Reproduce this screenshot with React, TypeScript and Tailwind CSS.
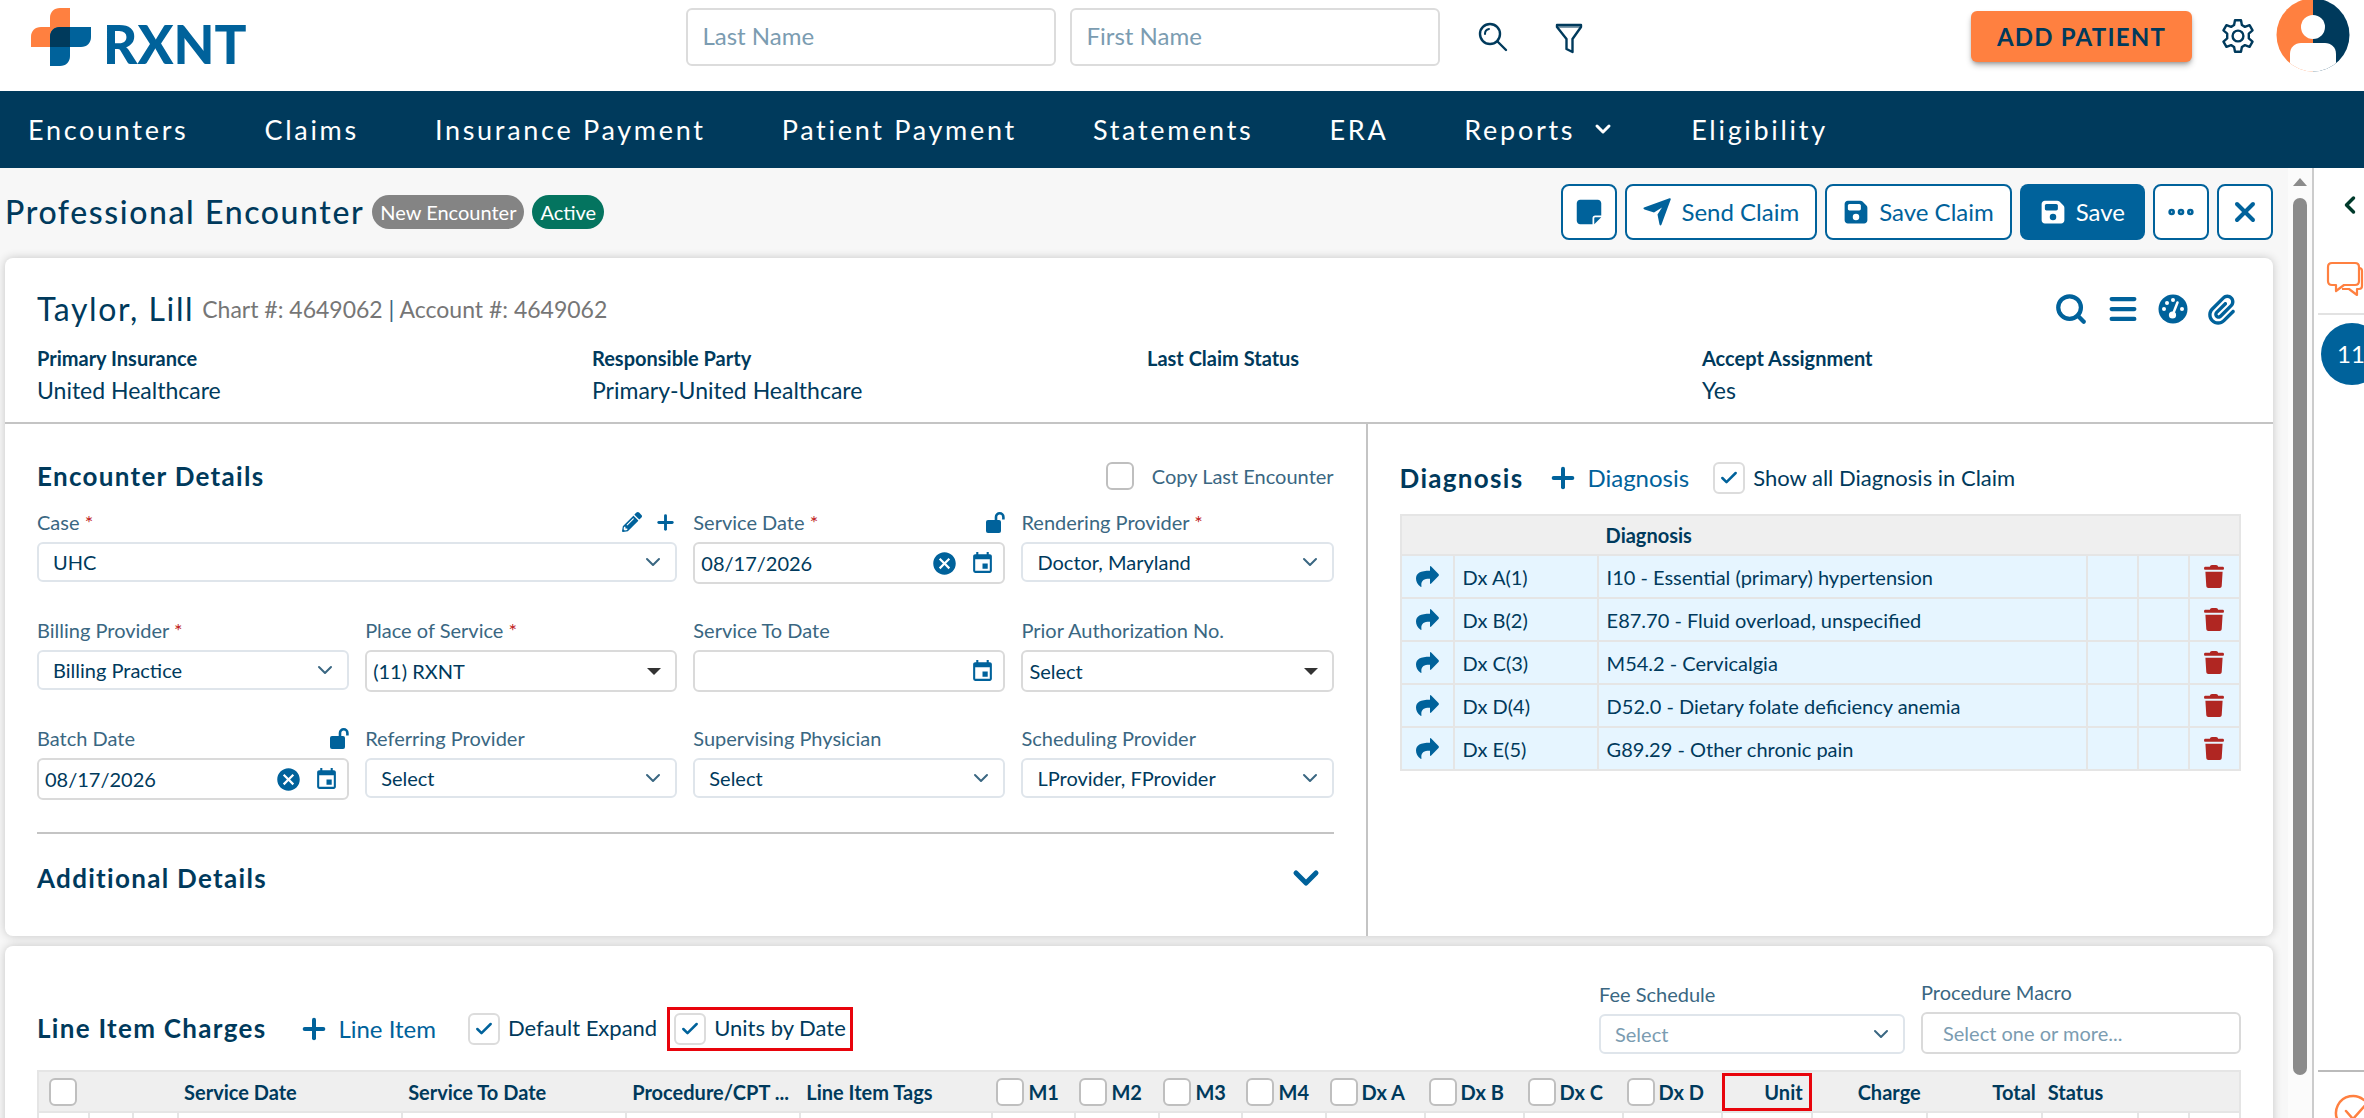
import { useId, type ReactNode } from "react";
import { FaPencilAlt } from "react-icons/fa";
import { FaFloppyDisk, FaNoteSticky, FaPaperclip } from "react-icons/fa6";
import { MdCancel, MdEvent } from "react-icons/md";
import { Check, ChevronDown, ChevronLeft, Ellipsis, Menu, Plus, Search, X } from "lucide-react";

const navItems = [
  { label: "Encounters" },
  { label: "Claims" },
  { label: "Insurance Payment" },
  { label: "Patient Payment" },
  { label: "Statements" },
  { label: "ERA" },
  { label: "Reports", menu: true },
  { label: "Eligibility" },
];

const insurance = [
  { label: "Primary Insurance", value: "United Healthcare" },
  { label: "Responsible Party", value: "Primary-United Healthcare" },
  { label: "Last Claim Status", value: "" },
  { label: "Accept Assignment", value: "Yes" },
];

const diagnoses = [
  { dx: "Dx A(1)", text: "I10 - Essential (primary) hypertension" },
  { dx: "Dx B(2)", text: "E87.70 - Fluid overload, unspecified" },
  { dx: "Dx C(3)", text: "M54.2 - Cervicalgia" },
  { dx: "Dx D(4)", text: "D52.0 - Dietary folate deficiency anemia" },
  { dx: "Dx E(5)", text: "G89.29 - Other chronic pain" },
];

const chargeColumns = [
  { width: "w-[51px]", check: true },
  { width: "w-[44px]" },
  { width: "w-[45px]" },
  { width: "w-[224px]", label: "Service Date" },
  { width: "w-[224px]", label: "Service To Date" },
  { width: "w-[174px]", label: "Procedure/CPT ..." },
  { width: "w-[192px]", label: "Line Item Tags" },
  { width: "w-[83px]", label: "M1", check: true },
  { width: "w-[84px]", label: "M2", check: true },
  { width: "w-[83px]", label: "M3", check: true },
  { width: "w-[83px]", label: "M4", check: true },
  { width: "w-[99px]", label: "Dx A", check: true },
  { width: "w-[99px]", label: "Dx B", check: true },
  { width: "w-[99px]", label: "Dx C", check: true },
  { width: "w-[99px]", label: "Dx D", check: true },
  { width: "w-[90px]", label: "Unit", right: true, marked: true },
  { width: "w-[115px]", label: "Charge", right: true },
  { width: "w-[115px]", label: "Total", right: true },
  { width: "w-[96px]", label: "Status" },
  { width: "w-[51px]" },
  { width: "w-[51px]" },
];

const Logo = () => (
  <a href="#" aria-label="RXNT" className="flex items-end gap-3">
    <svg width="60" height="58" viewBox="0 0 60 58">
      <path d="M39 0v39H0V29c0-6 4-10 10-10h9V10C19 4 23 0 29 0z" fill="#ff8040" />
      <path d="M19 58V29c0-6 4-10 10-10h31v10c0 6-4 10-10 10H39v9c0 6-4 10-10 10z" fill="#00629b" />
      <path d="M19 39V29c0-6 4-10 10-10h10v20z" fill="#003a5c" />
    </svg>
    <span className="text-[53px] leading-[44px] font-black text-[#00629b]">RXNT</span>
  </a>
);

const SearchIcon = () => (
  <svg width="30" height="30" viewBox="0 0 30 30" fill="none" stroke="#003a5c" strokeWidth="2.4" strokeLinecap="round">
    <circle cx="12" cy="12" r="10" />
    <path d="M19.500 19.500L28 28" />
    <path d="M7 12a5 5 0 0 1 4-5" strokeWidth="2" />
  </svg>
);

const FilterIcon = () => (
  <svg width="30" height="32" viewBox="0 0 30 32" fill="none" stroke="#003a5c" strokeWidth="2.4" strokeLinejoin="round">
    <path d="M3 3h24v2l-8.500 12v13l-6-3V17L3 5z" />
    <path d="M3 5h24" strokeWidth="1" />
  </svg>
);

const GearIcon = () => (
  <svg width="36" height="36" viewBox="0 0 24 24" fill="none" stroke="#003a5c" strokeWidth="1.600" strokeLinejoin="round">
    <path d="M10 1.500h4l.6 3.200 2 1.200 3.100-1.100 2 3.500-2.500 2.100v3.200l2.500 2.100-2 3.500-3.100-1.100-2 1.200-.6 3.200h-4l-.6-3.200-2-1.200-3.100 1.100-2-3.500 2.500-2.100v-3.200L2.300 8.300l2-3.500 3.100 1.100 2-1.200z" />
    <circle cx="12" cy="12" r="3.600" />
  </svg>
);

const Avatar = () => (
  <svg width="74" height="74" viewBox="0 0 74 74">
    <defs>
      <clipPath id="avatar-clip">
        <circle cx="37" cy="37" r="36.500" />
      </clipPath>
    </defs>
    <g clipPath="url(#avatar-clip)">
      <path d="M0 0h37v74H0z" fill="#ff8040" />
      <path d="M37 0h37v74H37z" fill="#003a5c" />
      <circle cx="37" cy="29" r="12" fill="#fff" />
      <path d="M14 74V56c0-7 5-11 11-11h24c6 0 11 4 11 11v18z" fill="#fff" />
    </g>
  </svg>
);

const SendIcon = () => (
  <svg width="28" height="28" viewBox="0 0 28 28" fill="currentColor">
    <path d="M1 9.500L26.500.3Q28 0 27.700 1.500L18.500 26.500Q17.500 28.300 16.500 26.500L14.500 16.500L19 9.500L11 14.500L1.500 11.500Q-.5 10.500 1 9.500z" />
  </svg>
);

const UnlockIcon = () => (
  <svg width="19" height="21" viewBox="0 0 19 21">
    <rect y="8" width="15" height="13" rx="2" fill="currentColor" />
    <path d="M10 9V5a3.700 3.700 0 0 1 7.400 0v2.500" fill="none" stroke="currentColor" strokeWidth="2.600" />
  </svg>
);

const ShareIcon = () => (
  <svg width="23" height="21" viewBox="0 0 23 21" className="mx-auto" fill="#00629b">
    <path d="M14 1q0-1.500 1.200-.5l7.300 7.500q.8 1 0 2l-7.300 7.500q-1.200 1-1.200-.5V12.700C8 12.500 4.500 14.500 5.500 20.500Q5.300 21.200 4.600 20.800C1.500 18.500 0 15.500 0 12.500C0 7 4.500 4.700 14 4.700z" />
  </svg>
);

const TrashIcon = () => (
  <svg width="20" height="23" viewBox="0 0 20 23" className="mx-auto" fill="#b02622">
    <path d="M6.500.5Q7 0 8 0h4q1 0 1.500.5l.7 1.300H19q1 0 1 1.500T19 4.800H1q-1 0-1-1.500T1 1.800h4.800zM1.400 6.700h17.200l-.9 14.500q-.2 1.800-2 1.800H4.300q-1.800 0-2-1.800z" />
  </svg>
);

const GaugeIcon = () => (
  <svg width="30" height="30" viewBox="0 0 30 30">
    <circle cx="15" cy="15" r="14.500" fill="#00629b" />
    <g fill="#fff">
      <circle cx="15" cy="6" r="2" />
      <circle cx="9" cy="9" r="2" />
      <circle cx="6" cy="15" r="2" />
      <circle cx="24" cy="15" r="2" />
      <circle cx="14.500" cy="21" r="3.600" />
    </g>
    <path d="M15 20l4.500-11.500" stroke="#fff" strokeWidth="2.500" strokeLinecap="round" />
  </svg>
);

const ChatIcon = () => (
  <svg width="38" height="38" viewBox="0 0 38 38" fill="none" stroke="#ff8040" strokeWidth="2.200" strokeLinejoin="round">
    <path d="M6 2h23c3 0 4 2 4 4v14c0 3-1 4-4 4H18l-8 6v-6H6c-3 0-4-1-4-4V6c0-2 1-4 4-4z" />
    <path d="M33 7c2 0 3 1 3 3v15c0 2-1 3-3 3h-2v6l-8-6h-7" />
  </svg>
);

type CheckBoxProps = { label?: string; name?: string; checked?: boolean; className?: string };

const CheckBox = ({ label, name, checked, className = "gap-2" }: CheckBoxProps) => (
  <label className={`flex items-center whitespace-nowrap ${className}`}>
    <span className="relative flex shrink-0">
      <input
        type="checkbox"
        defaultChecked={checked}
        aria-label={label ? undefined : name}
        className={
          checked
            ? "peer size-8 appearance-none rounded-md border-2 border-[#dcdcdc] bg-white"
            : "peer size-7 appearance-none rounded-md border-2 border-[#bfbfbf] bg-white"
        }
      />
      <Check className="pointer-events-none absolute inset-0 m-auto hidden size-5 text-[#00629b] peer-checked:block" strokeWidth={3} />
    </span>
    {label}
  </label>
);

type FieldProps = {
  label: string;
  kind?: "select" | "date" | "combo";
  value?: string;
  required?: boolean;
  icons?: ReactNode;
  className?: string;
};

const Field = ({ label, kind = "select", value = "", required, icons, className = "" }: FieldProps) => {
  const id = useId();
  return (
    <div className={className}>
      <div className="flex h-7 items-center justify-between">
        <label htmlFor={id} className="text-[#3a6782]">
          {label} {required && <span className="text-[#c02020]">*</span>}
        </label>
        {icons && <span className="flex items-center gap-3 text-[#00629b]">{icons}</span>}
      </div>
      <div className="relative mt-1.5">
        {kind === "date" ? (
          <>
            <input id={id} defaultValue={value} className="h-[42px] w-full rounded-md border-2 border-[#dadada] bg-white pr-20 pl-1.5" />
            <span className="absolute inset-y-0 right-2.5 flex items-center gap-3 text-[#00629b]">
              {value && (
                <button aria-label={`Clear ${label}`}>
                  <MdCancel size={27} />
                </button>
              )}
              <button aria-label={`Pick ${label}`}>
                <MdEvent size={25} />
              </button>
            </span>
          </>
        ) : (
          <>
            <select
              id={id}
              className={
                kind === "select"
                  ? "h-10 w-full appearance-none rounded-md border-2 border-[#dfe5eb] bg-white px-3.5"
                  : "h-[42px] w-full appearance-none rounded-md border-2 border-[#dadada] bg-white px-1.5"
              }
            >
              <option>{value}</option>
            </select>
            {kind === "select" ? (
              <ChevronDown className="pointer-events-none absolute top-2 right-3 size-6 text-[#3a6782]" strokeWidth={2} />
            ) : (
              <svg className="pointer-events-none absolute top-[18px] right-4" width="14" height="7" viewBox="0 0 14 7">
                <path d="M0 0h14L7 7z" fill="#333" />
              </svg>
            )}
          </>
        )}
      </div>
    </div>
  );
};

const outlineButton =
  "flex h-14 items-center justify-center gap-2.5 rounded-lg border-2 border-[#00629b] bg-white text-2xl text-[#00629b]";

const nameInput =
  "h-[58px] w-[370px] rounded-md border-2 border-[#dcdcdc] px-3.5 pb-1 text-2xl placeholder:text-[#7b9cb1]";

const Header = () => (
  <header className="flex h-[91px] items-start bg-white pr-3.5 pl-[31px]">
    <div className="flex flex-[655] pt-2">
      <Logo />
    </div>
    <div className="flex items-start gap-3.5 pt-2">
      <input aria-label="Last Name" placeholder="Last Name" className={nameInput} />
      <input aria-label="First Name" placeholder="First Name" className={nameInput} />
      <button aria-label="Search" className="ml-6 pt-3.5">
        <SearchIcon />
      </button>
      <button aria-label="Filter" className="ml-8 pt-3.5">
        <FilterIcon />
      </button>
    </div>
    <div className="flex flex-[765] items-start justify-end">
      <button className="mt-[11px] h-[51px] rounded-md bg-[#ff8040] px-[26px] text-2xl font-bold tracking-wider shadow-md shadow-black/30">
        ADD PATIENT
      </button>
      <button aria-label="Settings" className="mt-[18px] ml-7">
        <GearIcon />
      </button>
      <button aria-label="Account" className="-mt-0.5 ml-5">
        <Avatar />
      </button>
    </div>
  </header>
);

const Nav = () => (
  <nav className="flex h-[77px] items-center gap-[76px] bg-[#003a5c] pl-7 text-[27px] tracking-widest text-white">
    {navItems.map((item) => (
      <a key={item.label} href="#" className="flex items-center gap-4 whitespace-nowrap">
        {item.label}
        {item.menu && <ChevronDown className="size-6" strokeWidth={3} />}
      </a>
    ))}
  </nav>
);

const TitleBar = () => (
  <div className="flex items-start justify-between pt-4">
    <div className="flex h-14 items-center gap-2">
      <h1 className="text-[32px] font-medium tracking-wider">Professional Encounter</h1>
      <span className="h-[34px] rounded-full bg-[#848484] px-2 leading-[34px] text-white">New Encounter</span>
      <span className="h-[34px] rounded-full bg-[#04745f] px-2 leading-[34px] text-white">Active</span>
    </div>
    <div className="flex gap-2">
      <button aria-label="Notes" className={`${outlineButton} w-14`}>
        <FaNoteSticky size={28} />
      </button>
      <button className={`${outlineButton} px-4`}>
        <SendIcon />
        Send Claim
      </button>
      <button className={`${outlineButton} px-4`}>
        <FaFloppyDisk size={26} />
        Save Claim
      </button>
      <button className="flex h-14 items-center gap-2.5 rounded-lg bg-[#00629b] px-5 text-2xl text-white">
        <FaFloppyDisk size={26} />
        Save
      </button>
      <button aria-label="More" className={`${outlineButton} w-14`}>
        <Ellipsis size={32} strokeWidth={3} />
      </button>
      <button aria-label="Close" className={`${outlineButton} w-14`}>
        <X size={32} strokeWidth={3} />
      </button>
    </div>
  </div>
);

const PatientSummary = () => (
  <div className="border-b-2 border-[#c4c4c4] px-8 pt-[26px] pb-4">
    <div className="flex items-center justify-between pr-1">
      <div className="flex items-center gap-2 text-[23px]">
        <h2 className="text-[32px] leading-[50px] tracking-wider">Taylor, Lill</h2>
        <p className="text-[#767676]">
          Chart #: 4649062 <span className="text-[#3a6782]">|</span> Account #: 4649062
        </p>
      </div>
      <div className="flex items-center gap-[18px] text-[#00629b]">
        <button aria-label="Find">
          <Search size={34} strokeWidth={3} />
        </button>
        <button aria-label="List">
          <Menu size={34} strokeWidth={3} />
        </button>
        <button aria-label="Dashboard">
          <GaugeIcon />
        </button>
        <button aria-label="Attachments">
          <FaPaperclip size={31} />
        </button>
      </div>
    </div>
    <dl className="mt-2 grid grid-cols-4 gap-x-4">
      {insurance.map((item) => (
        <div key={item.label}>
          <dt className="leading-8 font-bold">{item.label}</dt>
          <dd className="h-8 text-[23px] leading-8">{item.value}</dd>
        </div>
      ))}
    </dl>
  </div>
);

const EncounterDetails = () => (
  <section className="border-r-2 border-[#c4c4c4] px-8 pt-8 pb-[38px]">
    <div className="flex h-10 items-center justify-between">
      <h3 className="text-[26px] font-bold tracking-wider">Encounter Details</h3>
      <CheckBox label="Copy Last Encounter" className="gap-[18px] text-[#3a6782]" />
    </div>
    <div className="mt-3 grid grid-cols-4 gap-x-4 gap-y-8">
      <Field
        label="Case"
        value="UHC"
        required
        className="col-span-2"
        icons={
          <>
            <button aria-label="Edit case">
              <FaPencilAlt size={20} />
            </button>
            <button aria-label="Add case">
              <Plus size={23} strokeWidth={3} />
            </button>
          </>
        }
      />
      <Field label="Service Date" kind="date" value="08/17/2026" required icons={<UnlockIcon />} />
      <Field label="Rendering Provider" value="Doctor, Maryland" required />
      <Field label="Billing Provider" value="Billing Practice" required />
      <Field label="Place of Service" kind="combo" value="(11) RXNT" required />
      <Field label="Service To Date" kind="date" />
      <Field label="Prior Authorization No." kind="combo" value="Select" />
      <Field label="Batch Date" kind="date" value="08/17/2026" icons={<UnlockIcon />} />
      <Field label="Referring Provider" value="Select" />
      <Field label="Supervising Physician" value="Select" />
      <Field label="Scheduling Provider" value="LProvider, FProvider" />
    </div>
    <div className="mt-8 flex items-center justify-between border-t-2 border-[#c4c4c4] pt-6 pr-2">
      <h3 className="text-[26px] font-bold tracking-wider">Additional Details</h3>
      <button aria-label="Expand additional details">
        <ChevronDown size={40} strokeWidth={3} className="text-[#00629b]" />
      </button>
    </div>
  </section>
);

const Diagnosis = () => (
  <section className="px-8 pt-[34px]">
    <div className="flex h-10 items-center gap-6">
      <h3 className="text-[26px] font-bold tracking-wider">Diagnosis</h3>
      <button className="flex items-center gap-2 text-2xl text-[#00629b]">
        <Plus size={32} strokeWidth={3} />
        Diagnosis
      </button>
      <CheckBox label="Show all Diagnosis in Claim" checked className="gap-2 text-[22px]" />
    </div>
    <table className="mt-4 w-full table-fixed border-collapse text-left">
      <thead>
        <tr className="h-10 border-2 border-[#e5e5e5] bg-[#efefef]">
          <th className="w-[53px]" />
          <th className="w-36" />
          <th className="px-2 font-bold">Diagnosis</th>
          <th className="w-[51px]" />
          <th className="w-[51px]" />
          <th className="w-[51px]" />
        </tr>
      </thead>
      <tbody className="bg-[#e6f5ff]">
        {diagnoses.map((row) => (
          <tr key={row.dx} className="h-[43px]">
            <td className="border-2 border-[#e5e5e5]">
              <button aria-label={`Move ${row.dx}`} className="block w-full">
                <ShareIcon />
              </button>
            </td>
            <td className="border-2 border-[#e5e5e5] px-2">{row.dx}</td>
            <td className="border-2 border-[#e5e5e5] px-2">{row.text}</td>
            <td className="border-2 border-[#e5e5e5]" />
            <td className="border-2 border-[#e5e5e5]" />
            <td className="border-2 border-[#e5e5e5]">
              <button aria-label={`Delete ${row.dx}`} className="block w-full">
                <TrashIcon />
              </button>
            </td>
          </tr>
        ))}
      </tbody>
    </table>
  </section>
);

const LineItems = () => (
  <section className="flex-1 rounded-lg bg-white px-8 pt-8 shadow-[0_0_10px_rgba(0,0,0,0.2)]">
    <div className="flex items-end justify-between">
      <div className="flex h-[51px] items-center">
        <h3 className="text-[26px] font-bold tracking-wider">Line Item Charges</h3>
        <button className="ml-8 flex items-center gap-2 text-2xl text-[#00629b]">
          <Plus size={32} strokeWidth={3} />
          Line Item
        </button>
        <CheckBox label="Default Expand" checked className="ml-8 gap-2 text-[22px]" />
        <div className="ml-2.5 border-3 border-[#e8040c] px-1 py-[3px]">
          <CheckBox label="Units by Date" checked className="gap-2 text-[22px]" />
        </div>
      </div>
      <div className="flex items-end gap-4">
        <Field label="Fee Schedule" value="Select" className="w-[306px] [&_select]:text-[#7b9cb1]" />
        <div className="flex w-80 flex-col">
          <label htmlFor="macro" className="flex h-7 items-center text-[#3a6782]">
            Procedure Macro
          </label>
          <input
            id="macro"
            placeholder="Select one or more..."
            className="mt-1.5 h-[42px] rounded-md border-2 border-[#dadada] px-5 placeholder:text-[#7b9cb1]"
          />
        </div>
      </div>
    </div>
    <table className="mt-4 w-full table-fixed border-collapse text-left whitespace-nowrap">
      <thead>
        <tr className="h-[41px] border-2 border-[#e5e5e5] bg-[#efefef]">
          {chargeColumns.map((col, i) => (
            <th key={i} className={`${col.width} p-0 font-bold ${col.right ? "text-right" : ""}`}>
              {col.check ? (
                <CheckBox label={col.label} name="Select all" className={col.label ? "gap-1 pl-1" : "pl-2.5"} />
              ) : (
                <div className={col.marked ? "border-3 border-[#e8040c] py-0.5 pr-1.5" : "px-1.5"}>{col.label}</div>
              )}
            </th>
          ))}
        </tr>
      </thead>
      <tbody>
        <tr className="h-11">
          {chargeColumns.map((_, i) => (
            <td key={i} className="border-2 border-[#e5e5e5]" />
          ))}
        </tr>
      </tbody>
    </table>
  </section>
);

const Scrollbar = () => (
  <div className="flex w-6 shrink-0 flex-col items-center gap-3 bg-[#fbfbfb] pt-2.5">
    <svg width="14" height="8" viewBox="0 0 14 8">
      <path d="M7 0l7 8H0z" fill="#8b8b8b" />
    </svg>
    <div className="mb-[43px] w-3.5 flex-1 rounded-full bg-[#8b8b8b]" />
  </div>
);

const SidePanel = () => (
  <aside className="flex w-[52px] shrink-0 flex-col overflow-hidden border-l-2 border-[#ccc] bg-white">
    <button aria-label="Expand panel" className="mt-[23px] ml-[22px]">
      <ChevronLeft size={28} strokeWidth={3} className="text-[#003a2b]" />
    </button>
    <button aria-label="Messages" className="mt-[42px] ml-3">
      <ChatIcon />
    </button>
    <div className="mt-3.5 ml-1 border-t-2 border-[#e2e2e2]" />
    <a href="#" className="mt-2 ml-[7px] flex h-[62px] w-[62px] shrink-0 items-center rounded-full bg-[#00629b] pl-4 text-2xl text-white">
      11
    </a>
    <div className="mt-auto ml-1 h-[48px] border-t-2 border-[#bbb] pt-[22px] pl-4">
      <svg width="40" height="40" viewBox="0 0 40 40" fill="none" stroke="#ff8040" strokeWidth="2.500" strokeLinecap="round">
        <path d="M30 6A17 17 0 1 0 36 19" />
        <path d="M12 17l7 8L36 6" />
      </svg>
    </div>
  </aside>
);

const App = () => {
  return (
    <div className="flex h-screen flex-col overflow-hidden bg-[#f7f7f7] font-[Lato,sans-serif] text-xl text-[#003a5c]">
      <Header />
      <Nav />
      <div className="flex min-h-0 flex-1">
        <main className="flex min-w-0 flex-1 flex-col overflow-hidden pr-[15px] pl-[5px]">
          <TitleBar />
          <div className="mt-[18px] rounded-lg bg-white shadow-[0_0_10px_rgba(0,0,0,0.2)]">
            <PatientSummary />
            <div className="grid grid-cols-[1362fr_905fr]">
              <EncounterDetails />
              <Diagnosis />
            </div>
          </div>
          <div className="mt-2.5 flex flex-1 flex-col">
            <LineItems />
          </div>
        </main>
        <Scrollbar />
        <SidePanel />
      </div>
    </div>
  );
};

export default App;
